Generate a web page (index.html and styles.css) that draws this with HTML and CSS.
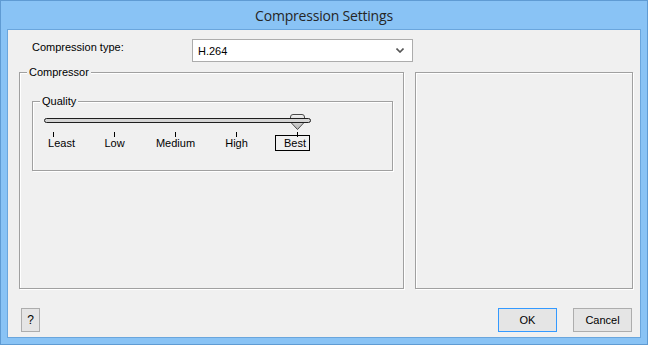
FILE: index.html
```html
<!DOCTYPE html>
<html lang="en">
<head>
  <meta charset="UTF-8" />
  <title>Compression Settings</title>
  <link rel="stylesheet" href="styles.css">
</head>
<body>
  <div class="window">
    <div class="titlebar">Compression Settings</div>

    <div class="client">
      <!-- Codec picker -->
      <div class="type-row">
        <span class="type-label">Compression type:</span>
        <div class="select">
          <span>H.264</span>
          <svg class="chevron" viewBox="0 0 8 5" xmlns="http://www.w3.org/2000/svg">
            <path d="M0.5 0.5 L4 4 L7.5 0.5" />
          </svg>
        </div>
      </div>

      <div class="groups">
        <div class="group compressor">
          <span class="legend">Compressor</span>

          <div class="group quality">
            <span class="legend">Quality</span>
            <div class="slider">
              <svg class="thumb" viewBox="0 0 17 17" xmlns="http://www.w3.org/2000/svg">
                <defs>
                  <linearGradient id="thumbFill" x1="0" y1="0" x2="0" y2="1">
                    <stop offset="0" stop-color="#f2f2f2" />
                    <stop offset="1" stop-color="#b4b4b4" />
                  </linearGradient>
                </defs>
                <path d="M4 0.5 H13 Q15.5 0.5 15.5 3 V8 L8.5 15.5 L1.5 8 V3 Q1.5 0.5 4 0.5 Z" />
              </svg>
              <div class="track"></div>
            </div>
            <div class="ticks">
              <div class="tick first"><i></i><span>Least</span></div>
              <div class="tick"><i></i><span>Low</span></div>
              <div class="tick"><i></i><span>Medium</span></div>
              <div class="tick"><i></i><span>High</span></div>
              <div class="tick active"><i></i><span>Best</span></div>
            </div>
          </div>
        </div>

        <div class="preview"></div>
      </div>

      <div class="buttons">
        <button class="btn help">?</button>
        <span class="spacer"></span>
        <button class="btn default">OK</button>
        <button class="btn">Cancel</button>
      </div>
    </div>
  </div>
</body>
</html>
```

FILE: styles.css
```css
body {
  margin: 0;
  padding: 0;
  font-family: "Liberation Sans", Arial, sans-serif;
  font-size: 11px;
  color: #000;
  background: #fff;
}

.window {
  width: 648px;
  height: 345px;
  box-sizing: border-box;
  border: 1px solid #5f9bd3;
  background: #89c3f5;
  padding: 0 6px 6px 6px;
  display: flex;
  flex-direction: column;
}

.titlebar {
  height: 28px;
  line-height: 30px;
  text-align: center;
  font-family: "Open Sans", "Noto Sans", sans-serif;
  font-size: 14px;
  color: #262626;
  letter-spacing: -0.2px;
}

.client {
  height: 309px;
  box-sizing: border-box;
  border: 1px solid #6aa6dd;
  background: #f0f0f0;
  padding: 9px 7px 5px 11px;
  display: flex;
  flex-direction: column;
}

/* Compression type row */
.type-row {
  display: flex;
  align-items: flex-start;
  height: 23px;
}

.type-label {
  width: 160px;
  margin-left: 13px;
  padding-top: 2px;
  line-height: 13px;
}

.select {
  width: 221px;
  height: 23px;
  box-sizing: border-box;
  border: 1px solid #acacac;
  background: #fff;
  display: flex;
  align-items: center;
  padding: 0 8px 0 5px;
}

.select span {
  flex: 1;
  font-size: 11px;
}

.chevron {
  width: 8px;
  height: 5px;
  fill: none;
  stroke: #555;
  stroke-width: 1.6;
}

/* Group boxes */
.groups {
  display: flex;
  gap: 11px;
  margin-top: 10px;
}

.group {
  position: relative;
  box-sizing: border-box;
  border: 1px solid #a0a0a0;
  box-shadow: inset 1px 1px 0 #fff, 1px 1px 0 #fff;
}

.legend {
  position: absolute;
  top: -7px;
  left: 7px;
  padding: 0 2px;
  line-height: 13px;
  background: #f0f0f0;
}

.compressor {
  width: 385px;
  height: 217px;
  padding: 28px 0 0 12px;
}

.preview {
  width: 218px;
  height: 217px;
  box-sizing: border-box;
  border: 1px solid #a0a0a0;
  box-shadow: inset 1px 1px 0 #fff, 1px 1px 0 #fff;
}

.quality {
  width: 361px;
  height: 70px;
  padding: 16px 0 0 0;
}

/* Trackbar */
.slider {
  position: relative;
  width: 267px;
  margin-left: 11px;
}

.track {
  position: relative;
  z-index: 1;
  height: 5px;
  box-sizing: border-box;
  border: 1px solid #1e1e1e;
  border-radius: 3px;
  background: #d4d4d4;
}

.thumb {
  position: absolute;
  left: 245px;
  top: -4px;
  width: 17px;
  height: 17px;
  z-index: 0;
}

.thumb path {
  fill: url(#thumbFill);
  stroke: #4a4a4a;
  stroke-width: 1;
}

.ticks {
  display: flex;
  margin: 9px 0 0 -10px;
}

.tick {
  width: 61px;
  display: flex;
  flex-direction: column;
  align-items: center;
}

.tick i {
  display: block;
  width: 1px;
  height: 5px;
  background: #000;
  margin-right: 1px;
}

.tick span {
  line-height: 13px;
}

.tick.first span {
  margin-left: 16px;
}

.tick.active span {
  margin: -2px 10px 0 0;
  padding: 1px 3px 0 8px;
  border: 1px solid #000;
}

/* Dialog buttons */
.buttons {
  display: flex;
  gap: 16px;
  margin-top: 19px;
  padding: 0 1px 0 2px;
}

.spacer {
  flex: 1;
}

.btn {
  height: 24px;
  width: 59px;
  box-sizing: border-box;
  border: 1px solid #adadad;
  background: #e5e5e5;
  font-family: "Liberation Sans", Arial, sans-serif;
  font-size: 11px;
  color: #000;
  padding: 0;
}

.btn.default {
  border-color: #3399ff;
}

.btn.help {
  width: 19px;
  font-size: 12px;
}
```
